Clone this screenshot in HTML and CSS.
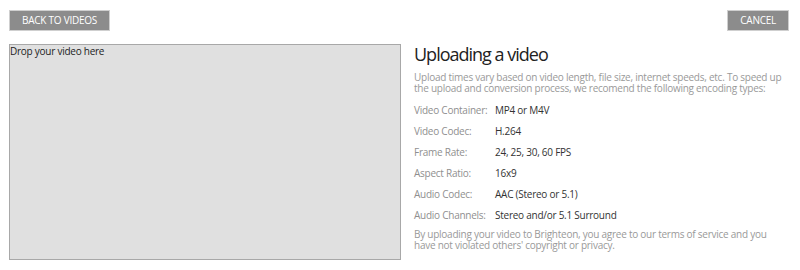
FILE: index.html
```html
<!DOCTYPE html>
<html>
  <head>
    <meta charset="UTF-8" />
    <title>Upload video</title>
    <link rel="stylesheet" href="styles.css">
  </head>
  <body>
    <div class="top-bar">
      <a href="#" class="btn">BACK TO VIDEOS</a>
      <a href="#" class="btn">CANCEL</a>
    </div>
    <div class="upload-page">
      <div class="drop-zone">Drop your video here</div>
      <div class="info">
        <h2>Uploading a video</h2>
        <p class="note">Upload times vary based on video length, file size, internet speeds, etc. To speed up the upload and conversion process, we recomend the following encoding types:</p>
        <div class="specs">
          <span class="label">Video Container:</span><span class="value">MP4 or M4V</span>
          <span class="label">Video Codec:</span><span class="value">H.264</span>
          <span class="label">Frame Rate:</span><span class="value">24, 25, 30, 60 FPS</span>
          <span class="label">Aspect Ratio:</span><span class="value">16x9</span>
          <span class="label">Audio Codec:</span><span class="value">AAC (Stereo or 5.1)</span>
          <span class="label">Audio Channels:</span><span class="value">Stereo and/or 5.1 Surround</span>
        </div>
        <p class="note">By uploading your video to Brighteon, you agree to our terms of service and you have not violated others' copyright or privacy.</p>
      </div>
    </div>
  </body>
</html>
```

FILE: styles.css
```css
body {
  margin: 0;
  padding: 10px 11px 0 9px;
  font-family: "Open Sans", sans-serif;
  letter-spacing: -0.25px;
  background: #fff;
}

/* Thanh nút trên cùng */
.top-bar {
  display: flex;
  justify-content: space-between;
}

.btn {
  display: block;
  background-color: #8c8c8c;
  color: #fff;
  font-size: 10px;
  line-height: 19px;
  padding: 0 12px;
  text-decoration: none;
  border: 1px solid #cfcfcf;
}

.upload-page {
  display: flex;
  margin-top: 13px;
}

/* Ô kéo thả video */
.drop-zone {
  width: 390px;
  height: 214px;
  background-color: #e0e0e0;
  border: 1px solid #a8a8a8;
  font-size: 10px;
  line-height: 12px;
  color: #222;
}

.info {
  flex: 1;
  margin-left: 13px;
}

.info h2 {
  margin: 0;
  font-weight: normal;
  font-size: 18px;
  letter-spacing: -1px;
  line-height: 20px;
  color: #222;
}

.note {
  margin: 8px 0 0;
  font-size: 10px;
  line-height: 11px;
  color: #999;
}

.specs {
  display: grid;
  grid-template-columns: 81px auto;
  row-gap: 9px;
  margin-top: 10px;
  font-size: 10px;
  line-height: 12px;
}

.label {
  color: #8f8f8f;
}

.value {
  color: #333;
}
```
